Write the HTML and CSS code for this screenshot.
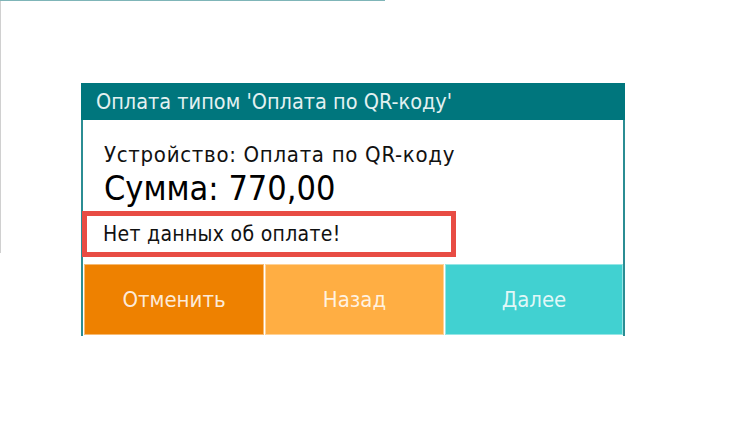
FILE: index.html
```html
<!DOCTYPE html>
<html lang="ru">
<head>
    <meta charset="UTF-8">
    <title>Оплата по QR-коду</title>
    <link rel="stylesheet" href="styles.css">
</head>
<body>
    <div class="dialog">
        <div class="dialog-title">Оплата типом 'Оплата по QR-коду'</div>
        <div class="dialog-body">
            <div class="device">Устройство: Оплата по QR-коду</div>
            <div class="sum">Сумма: 770,00</div>
            <div class="message">Нет данных об оплате!</div>

            <!-- кнопки -->
            <div class="buttons">
                <button class="btn btn-cancel">Отменить</button>
                <button class="btn btn-back">Назад</button>
                <button class="btn btn-next">Далее</button>
            </div>
        </div>
    </div>
</body>
</html>
```

FILE: styles.css
```css
/* страница */
body {
    margin: 0;
    padding: 83px 0 0 81px;
    font-family: "DejaVu Sans Condensed", "DejaVu Sans", sans-serif;
    background-color: #fff;
    /* остатки окна за диалогом */
    background-image: linear-gradient(#7fb5b8, #7fb5b8), linear-gradient(#d0d0d0, #d0d0d0);
    background-size: 385px 1px, 1px 253px;
    background-position: 0 0, 0 0;
    background-repeat: no-repeat;
}

.dialog {
    width: 544px;
}

/* заголовок */
.dialog-title {
    height: 37px;
    line-height: 38px;
    padding-left: 15px;
    background-color: #00767d;
    color: #e3f1f1;
    font-size: 21.5px;
}

.dialog-body {
    background-color: #fff;
    border-left: 2px solid #2b8d93;
    border-right: 2px solid #2b8d93;
    padding-top: 22px;
    padding-bottom: 1px;
}

.device {
    padding-left: 21px;
    font-size: 22px;
    letter-spacing: 0.7px;
    line-height: 26px;
    color: #111;
}

.sum {
    padding-left: 21px;
    margin-top: 2px;
    font-size: 34px;
    line-height: 36px;
    color: #000;
}

/* сообщение об ошибке */
.message {
    width: 348px;
    height: 35px;
    margin-top: 5px;
    margin-left: -1px;
    padding: 1px 0 0 16px;
    box-sizing: content-box;
    border: 5px solid #e84c44;
    font-size: 21px;
    letter-spacing: 0.3px;
    line-height: 35px;
    color: #111;
}

.buttons {
    display: grid;
    grid-template-columns: 180px 179px 178px;
    gap: 1px;
    margin-top: 7px;
    padding-left: 1px;
}

.btn {
    height: 71px;
    border: 1px solid rgba(255, 255, 255, 0.45);
    font-family: inherit;
    font-size: 22px;
    color: rgba(255, 255, 255, 0.85);
    cursor: pointer;
}

.btn-cancel {
    background-color: #ee8100;
}

.btn-back {
    background-color: #ffae43;
}

.btn-next {
    background-color: #41d1d1;
}
```
